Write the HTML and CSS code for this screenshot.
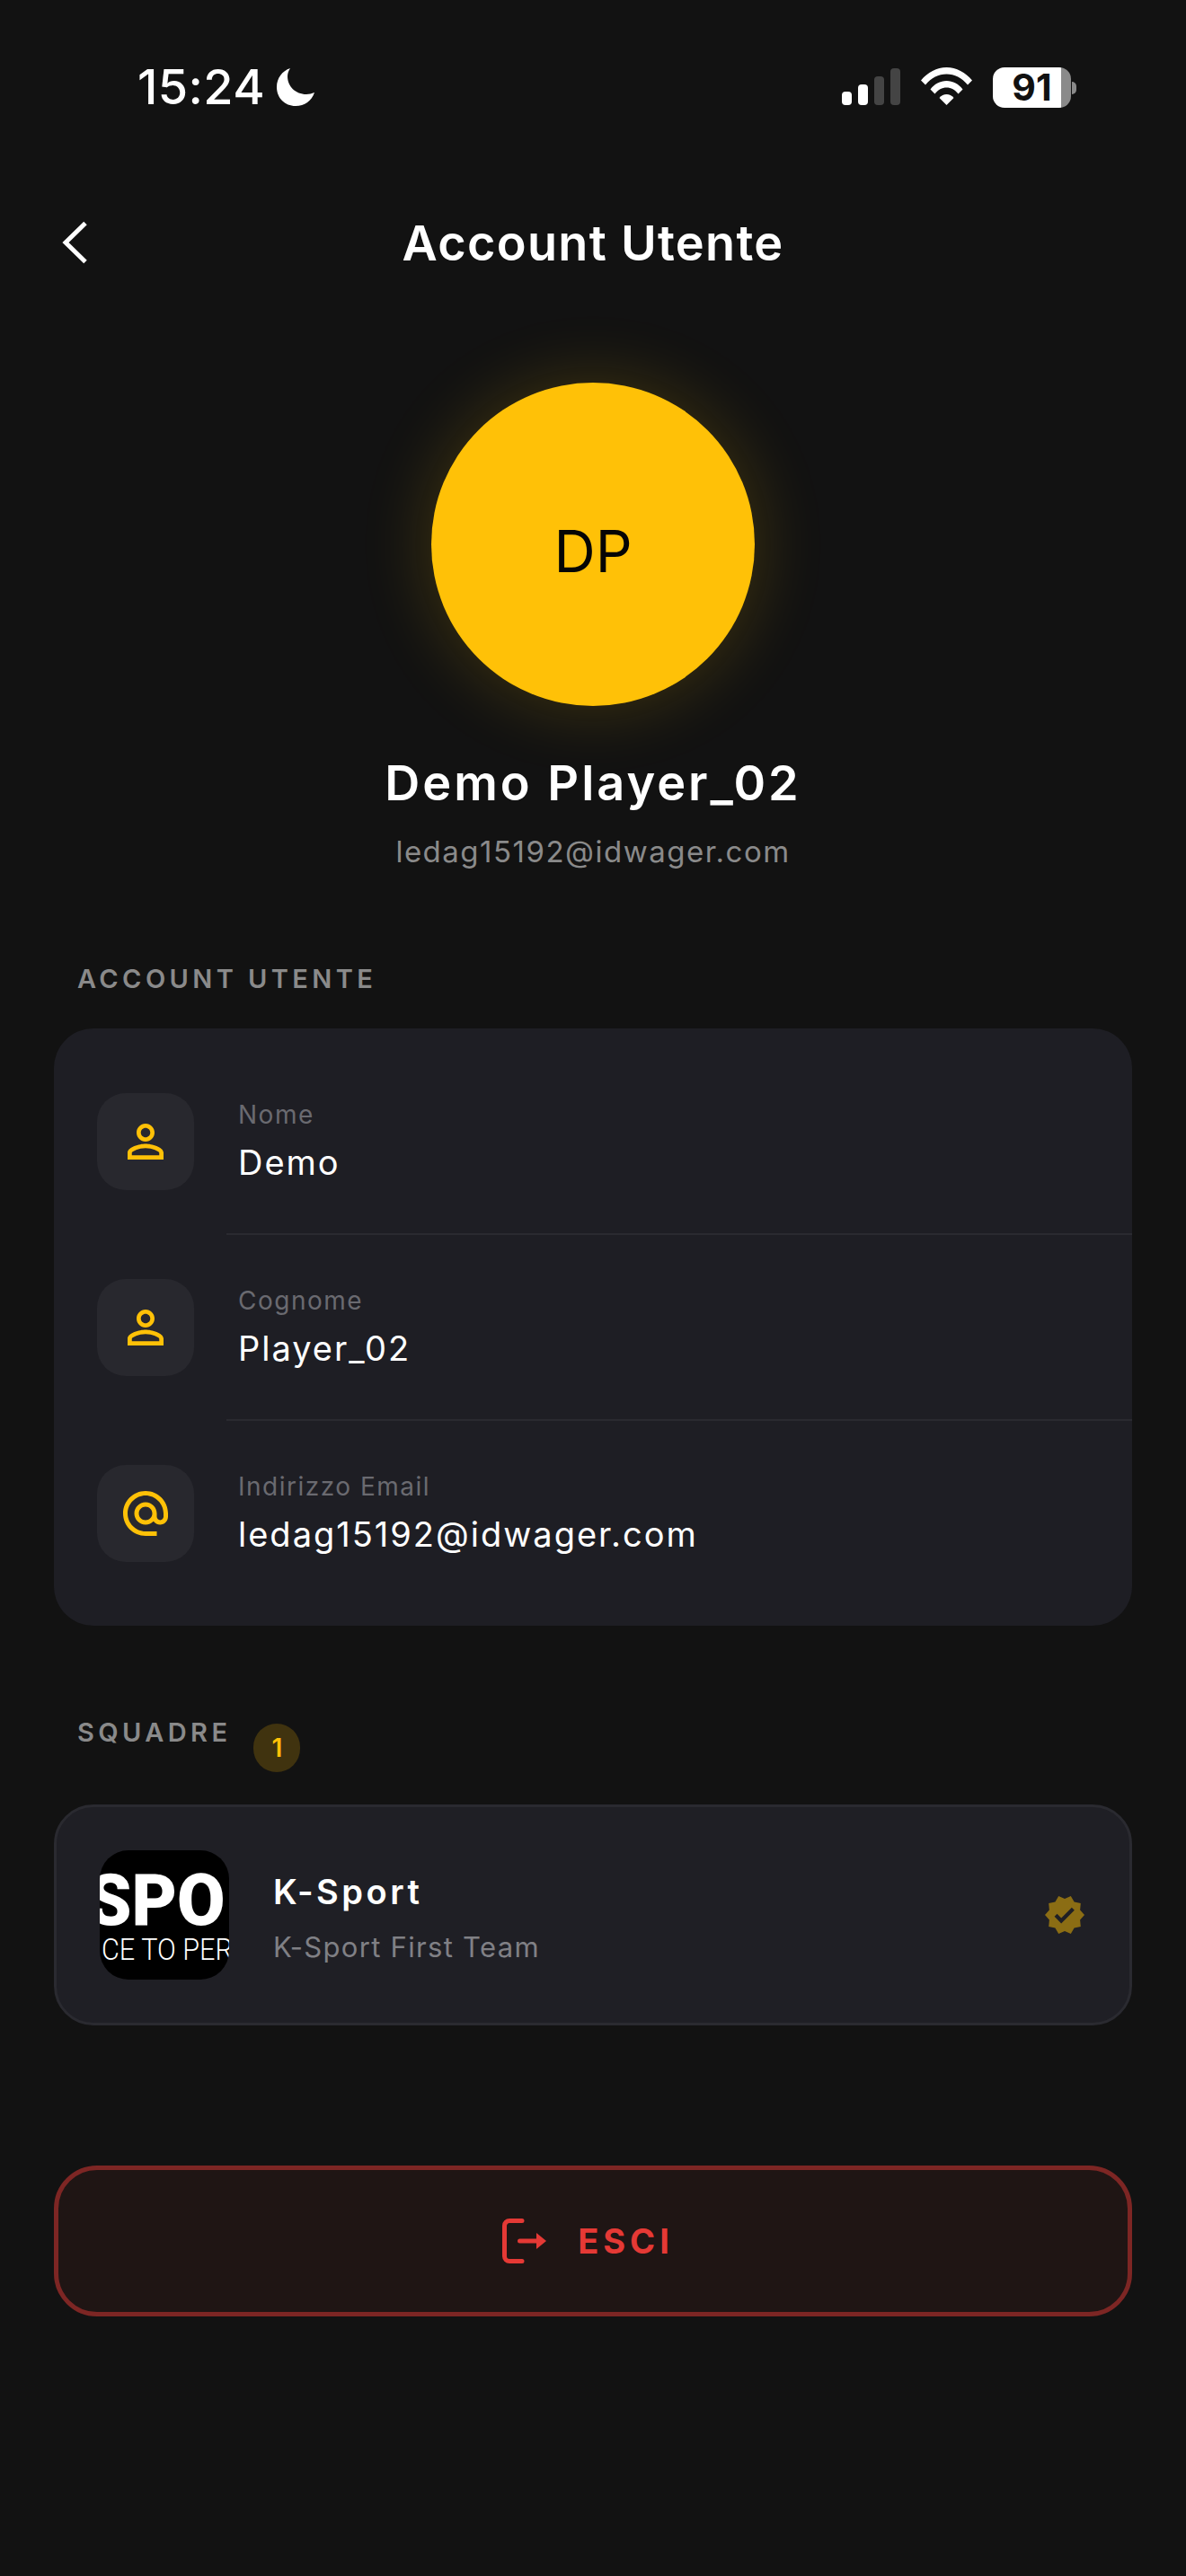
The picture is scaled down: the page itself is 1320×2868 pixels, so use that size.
FILE: index.html
```html
<!DOCTYPE html>
<html lang="it">
<head>
<meta charset="utf-8">
<title>Account Utente</title>
<link rel="stylesheet" href="styles.css">
</head>
<body>
<div class="page">
  <div class="status">
    <div class="status-left">
      <span class="time">15:24</span>
      <svg class="moon" viewBox="0 0 42 42"><path d="M15 0C6 3 0 11 0 21c0 12 9 21 21 21 10 0 18-6 21-15-3 1-6 2-9 2C21 29 12 20 12 9c0-3 1-6 3-9z" fill="#fff"/></svg>
    </div>
    <div class="status-right">
      <div class="signal">
        <span class="bar b1"></span><span class="bar b2"></span><span class="bar b3 off"></span><span class="bar b4 off"></span>
      </div>
      <svg class="wifi" viewBox="0 0 57 42"><path d="M0 14.500C7.500 5.500 17.500 0 28.500 0S49.500 5.500 57 14.500l-5 5C45.500 11.500 37.500 7.500 28.500 7.500S11.500 11.500 5 19.500z" fill="#fff"/><path d="M10.500 24.500C15 18.500 21.500 15 28.500 15s13.500 3.500 18 9.500l-5 5C38 25 33.500 22.500 28.500 22.500S19 25 15.500 29.500z" fill="#fff"/><path d="M20.500 34c2-2.500 5-4 8-4s6 1.500 8 4l-8 8z" fill="#fff"/></svg>
      <div class="battery">
        <div class="battery-body"><span class="battery-num">91</span></div>
        <span class="battery-tip"></span>
      </div>
    </div>
  </div>

  <header class="topbar">
    <svg class="back" viewBox="0 0 29 48"><path d="M26 2.500 4 24l22 21.500" fill="none" stroke="#fff" stroke-width="5"/></svg>
    <h1 class="title">Account Utente</h1>
  </header>

  <section class="profile">
    <div class="avatar">DP</div>
    <div class="name">Demo Player_02</div>
    <div class="email">ledag15192@idwager.com</div>
  </section>

  <h2 class="section-label">ACCOUNT UTENTE</h2>
  <div class="info-card">
    <div class="info-row">
      <div class="tile"><svg class="tile-icon" viewBox="0 0 24 24"><path d="M12 5.900c1.160 0 2.100.94 2.100 2.100s-.94 2.100-2.100 2.100S9.900 9.160 9.900 8s.94-2.100 2.100-2.100m0 9c2.970 0 6.100 1.460 6.100 2.100v1.100H5.900V17c0-.64 3.130-2.100 6.100-2.100M12 4C9.790 4 8 5.790 8 8s1.790 4 4 4 4-1.790 4-4-1.790-4-4-4zm0 9c-2.670 0-8 1.340-8 4v3h16v-3c0-2.660-5.330-4-8-4z"/></svg></div>
      <div class="info-text"><div class="info-label">Nome</div><div class="info-value">Demo</div></div>
    </div>
    <div class="info-row">
      <div class="tile"><svg class="tile-icon" viewBox="0 0 24 24"><path d="M12 5.900c1.160 0 2.100.94 2.100 2.100s-.94 2.100-2.100 2.100S9.900 9.160 9.900 8s.94-2.100 2.100-2.100m0 9c2.970 0 6.100 1.460 6.100 2.100v1.100H5.900V17c0-.64 3.130-2.100 6.100-2.100M12 4C9.790 4 8 5.790 8 8s1.790 4 4 4 4-1.790 4-4-1.790-4-4-4zm0 9c-2.670 0-8 1.340-8 4v3h16v-3c0-2.660-5.330-4-8-4z"/></svg></div>
      <div class="info-text"><div class="info-label">Cognome</div><div class="info-value">Player_02</div></div>
    </div>
    <div class="info-row">
      <div class="tile"><svg class="tile-icon" viewBox="0 0 24 24"><path d="M12 1.950c-5.520 0-10 4.480-10 10s4.480 10 10 10h5v-2h-5c-4.340 0-8-3.660-8-8s3.660-8 8-8 8 3.660 8 8v1.430c0 .79-.71 1.570-1.500 1.570s-1.500-.78-1.500-1.570v-1.430c0-2.760-2.240-5-5-5s-5 2.240-5 5 2.240 5 5 5c1.380 0 2.640-.56 3.540-1.470.65.89 1.770 1.470 2.960 1.470 1.970 0 3.500-1.600 3.500-3.570v-1.430c0-5.520-4.480-10-10-10zm0 13c-1.660 0-3-1.340-3-3s1.340-3 3-3 3 1.340 3 3-1.340 3-3 3z"/></svg></div>
      <div class="info-text"><div class="info-label">Indirizzo Email</div><div class="info-value">ledag15192@idwager.com</div></div>
    </div>
  </div>

  <div class="teams-head">
    <h2 class="section-label flat">SQUADRE</h2>
    <span class="count">1</span>
  </div>
  <div class="team-card">
    <div class="logo">
      <div class="logo-big">SPO</div>
      <div class="logo-small">CE TO PER</div>
    </div>
    <div class="team-text">
      <div class="team-name">K-Sport</div>
      <div class="team-sub">K-Sport First Team</div>
    </div>
    <svg class="verified" viewBox="0 0 24 24"><path d="M23 12l-2.440-2.790.34-3.690-3.610-.82-1.890-3.200L12 2.960 8.600 1.500 6.710 4.690 3.100 5.500l.34 3.700L1 12l2.440 2.790-.34 3.700 3.610.82L8.600 22.500l3.400-1.470 3.400 1.460 1.890-3.190 3.610-.82-.34-3.690L23 12zm-12.910 4.720l-3.800-3.810 1.480-1.480 2.320 2.330 5.850-5.870 1.480 1.480-7.330 7.350z"/></svg>
  </div>

  <button class="logout">
    <svg class="logout-icon" viewBox="0 0 49 50"><path d="M22 2.500H8A5.500 5.500 0 0 0 2.500 8v34A5.500 5.500 0 0 0 8 47.500h14" fill="none" stroke="#e53935" stroke-width="5" stroke-linecap="round"/><path d="M19.500 25H40" fill="none" stroke="#e53935" stroke-width="5" stroke-linecap="round"/><path d="M38 16l11 9-11 9z" fill="#e53935"/></svg>
    <span class="logout-text">ESCI</span>
  </button>
</div>
</body>
</html>
```
FILE: styles.css
```css
* { box-sizing: border-box; }
html, body { margin: 0; padding: 0; background: #121212; }
body { font-family: Inter, "Liberation Sans", sans-serif; color: #fff; }
.page { width: 1320px; height: 2868px; padding: 0 60px; overflow: hidden; }

.status { height: 221px; padding: 74px 62px 0 93px; display: flex; justify-content: space-between; align-items: flex-start; }
.status-left { display: flex; align-items: center; gap: 13px; height: 46px; }
.time { font-size: 54px; line-height: 46px; font-weight: 500; letter-spacing: 0.4px; }
.moon { width: 42px; height: 42px; }
.status-right { display: flex; align-items: flex-end; height: 46px; }
.signal { display: flex; align-items: flex-end; gap: 7px; height: 41px; margin-bottom: 3px; }
.bar { width: 11px; background: #fff; border-radius: 4px; }
.bar.off { background: #444; }
.b1 { height: 15px; } .b2 { height: 23px; } .b3 { height: 32px; } .b4 { height: 41px; }
.wifi { width: 57px; height: 42px; margin: 0 23px 3px; }
.battery { display: flex; align-items: center; }
.battery-body { width: 87px; height: 45px; border-radius: 13px; background: linear-gradient(90deg, #fff 0 76px, #8a8a8a 76px); display: flex; align-items: center; justify-content: center; }
.battery-num { color: #111; font-size: 41px; font-weight: 700; line-height: 45px; }
.battery-tip { width: 5px; height: 14px; background: #8a8a8a; border-radius: 0 5px 5px 0; margin-left: 1px; }

.topbar { height: 100px; display: flex; align-items: center; justify-content: center; position: relative; }
.back { position: absolute; left: 9px; top: 25px; width: 29px; height: 48px; }
.title { margin: 0; font-size: 54px; line-height: 100px; font-weight: 600; letter-spacing: 1.300px; }

.profile { display: flex; flex-direction: column; align-items: center; padding-top: 105px; }
.avatar { width: 360px; height: 360px; padding-top: 14px; border-radius: 50%; background: #ffc107; color: #050505; font-size: 64px; display: flex; align-items: center; justify-content: center; box-shadow: 0 0 80px rgba(255, 193, 7, 0.2); }
.name { margin-top: 56px; font-size: 54px; line-height: 60px; font-weight: 600; letter-spacing: 3px; }
.email { margin-top: 24px; font-size: 33px; line-height: 44px; color: #8a8a8a; letter-spacing: 1.500px; }

.section-label { margin: 100px 0 35px 26px; font-size: 29px; line-height: 40px; font-weight: 600; letter-spacing: 4.400px; color: #8a8a8a; }
.section-label.flat { margin: 0 0 0 26px; }

.info-card { height: 665px; padding: 22px 0; border-radius: 44px; background: #1e1e24; }
.info-row { height: 207px; padding-left: 48px; display: flex; align-items: center; gap: 49px; position: relative; }
.info-row + .info-row::before { content: ""; position: absolute; left: 192px; right: 0; top: -1px; height: 2px; background: #2a2a30; }
.tile { width: 108px; height: 108px; border-radius: 32px; background: #28282e; display: flex; align-items: center; justify-content: center; flex: none; }
.tile-icon { width: 60px; height: 60px; fill: #ffc107; }
.info-text { display: flex; flex-direction: column; }
.info-label { font-size: 28px; line-height: 34px; color: #6a6a70; letter-spacing: 1.500px; }
.info-value { margin-top: 13px; font-size: 38px; line-height: 46px; font-weight: 400; letter-spacing: 2px; color: #fff; }

.teams-head { margin-top: 99px; display: flex; align-items: flex-start; gap: 25px; }
.count { margin-top: 10px; width: 52px; height: 54px; border-radius: 27px; background: #40330f; color: #ffc107; font-size: 28px; font-weight: 600; display: flex; align-items: center; justify-content: center; }

.team-card { margin-top: 36px; height: 246px; padding: 0 48px; border: 3px solid #2a2a30; border-radius: 44px; background: #1f1f25; display: flex; align-items: center; }
.logo { width: 144px; height: 144px; border-radius: 32px; background: #000; overflow: hidden; flex: none; display: flex; flex-direction: column; }
.logo-big { margin: 16px 0 0 -13px; font-family: Roboto, sans-serif; font-size: 80px; line-height: 80px; font-weight: 900; white-space: nowrap; transform: scaleX(0.97); transform-origin: left; }
.logo-small { margin: -4px 0 0 2px; font-family: Roboto, sans-serif; font-size: 34px; line-height: 36px; font-weight: 300; white-space: nowrap; transform: scaleX(0.9); transform-origin: left; }
.team-text { margin-left: 49px; padding-top: 6px; flex: 1; }
.team-name { font-size: 38px; line-height: 46px; font-weight: 600; letter-spacing: 3.500px; }
.team-sub { margin-top: 19px; font-size: 31px; line-height: 40px; color: #808085; letter-spacing: 1.300px; }
.verified { width: 48px; height: 48px; fill: #8b6d14; }

.logout { margin: 156px 0 0; width: 100%; height: 168px; padding: 0 11px 0 0; border: 5px solid #7d2624; border-radius: 48px; background: #1f1514; display: flex; align-items: center; justify-content: center; gap: 35px; font-family: inherit; }
.logout-icon { width: 49px; height: 50px; }
.logout-text { color: #e53935; font-size: 38px; line-height: 46px; font-weight: 700; letter-spacing: 5px; }
```
